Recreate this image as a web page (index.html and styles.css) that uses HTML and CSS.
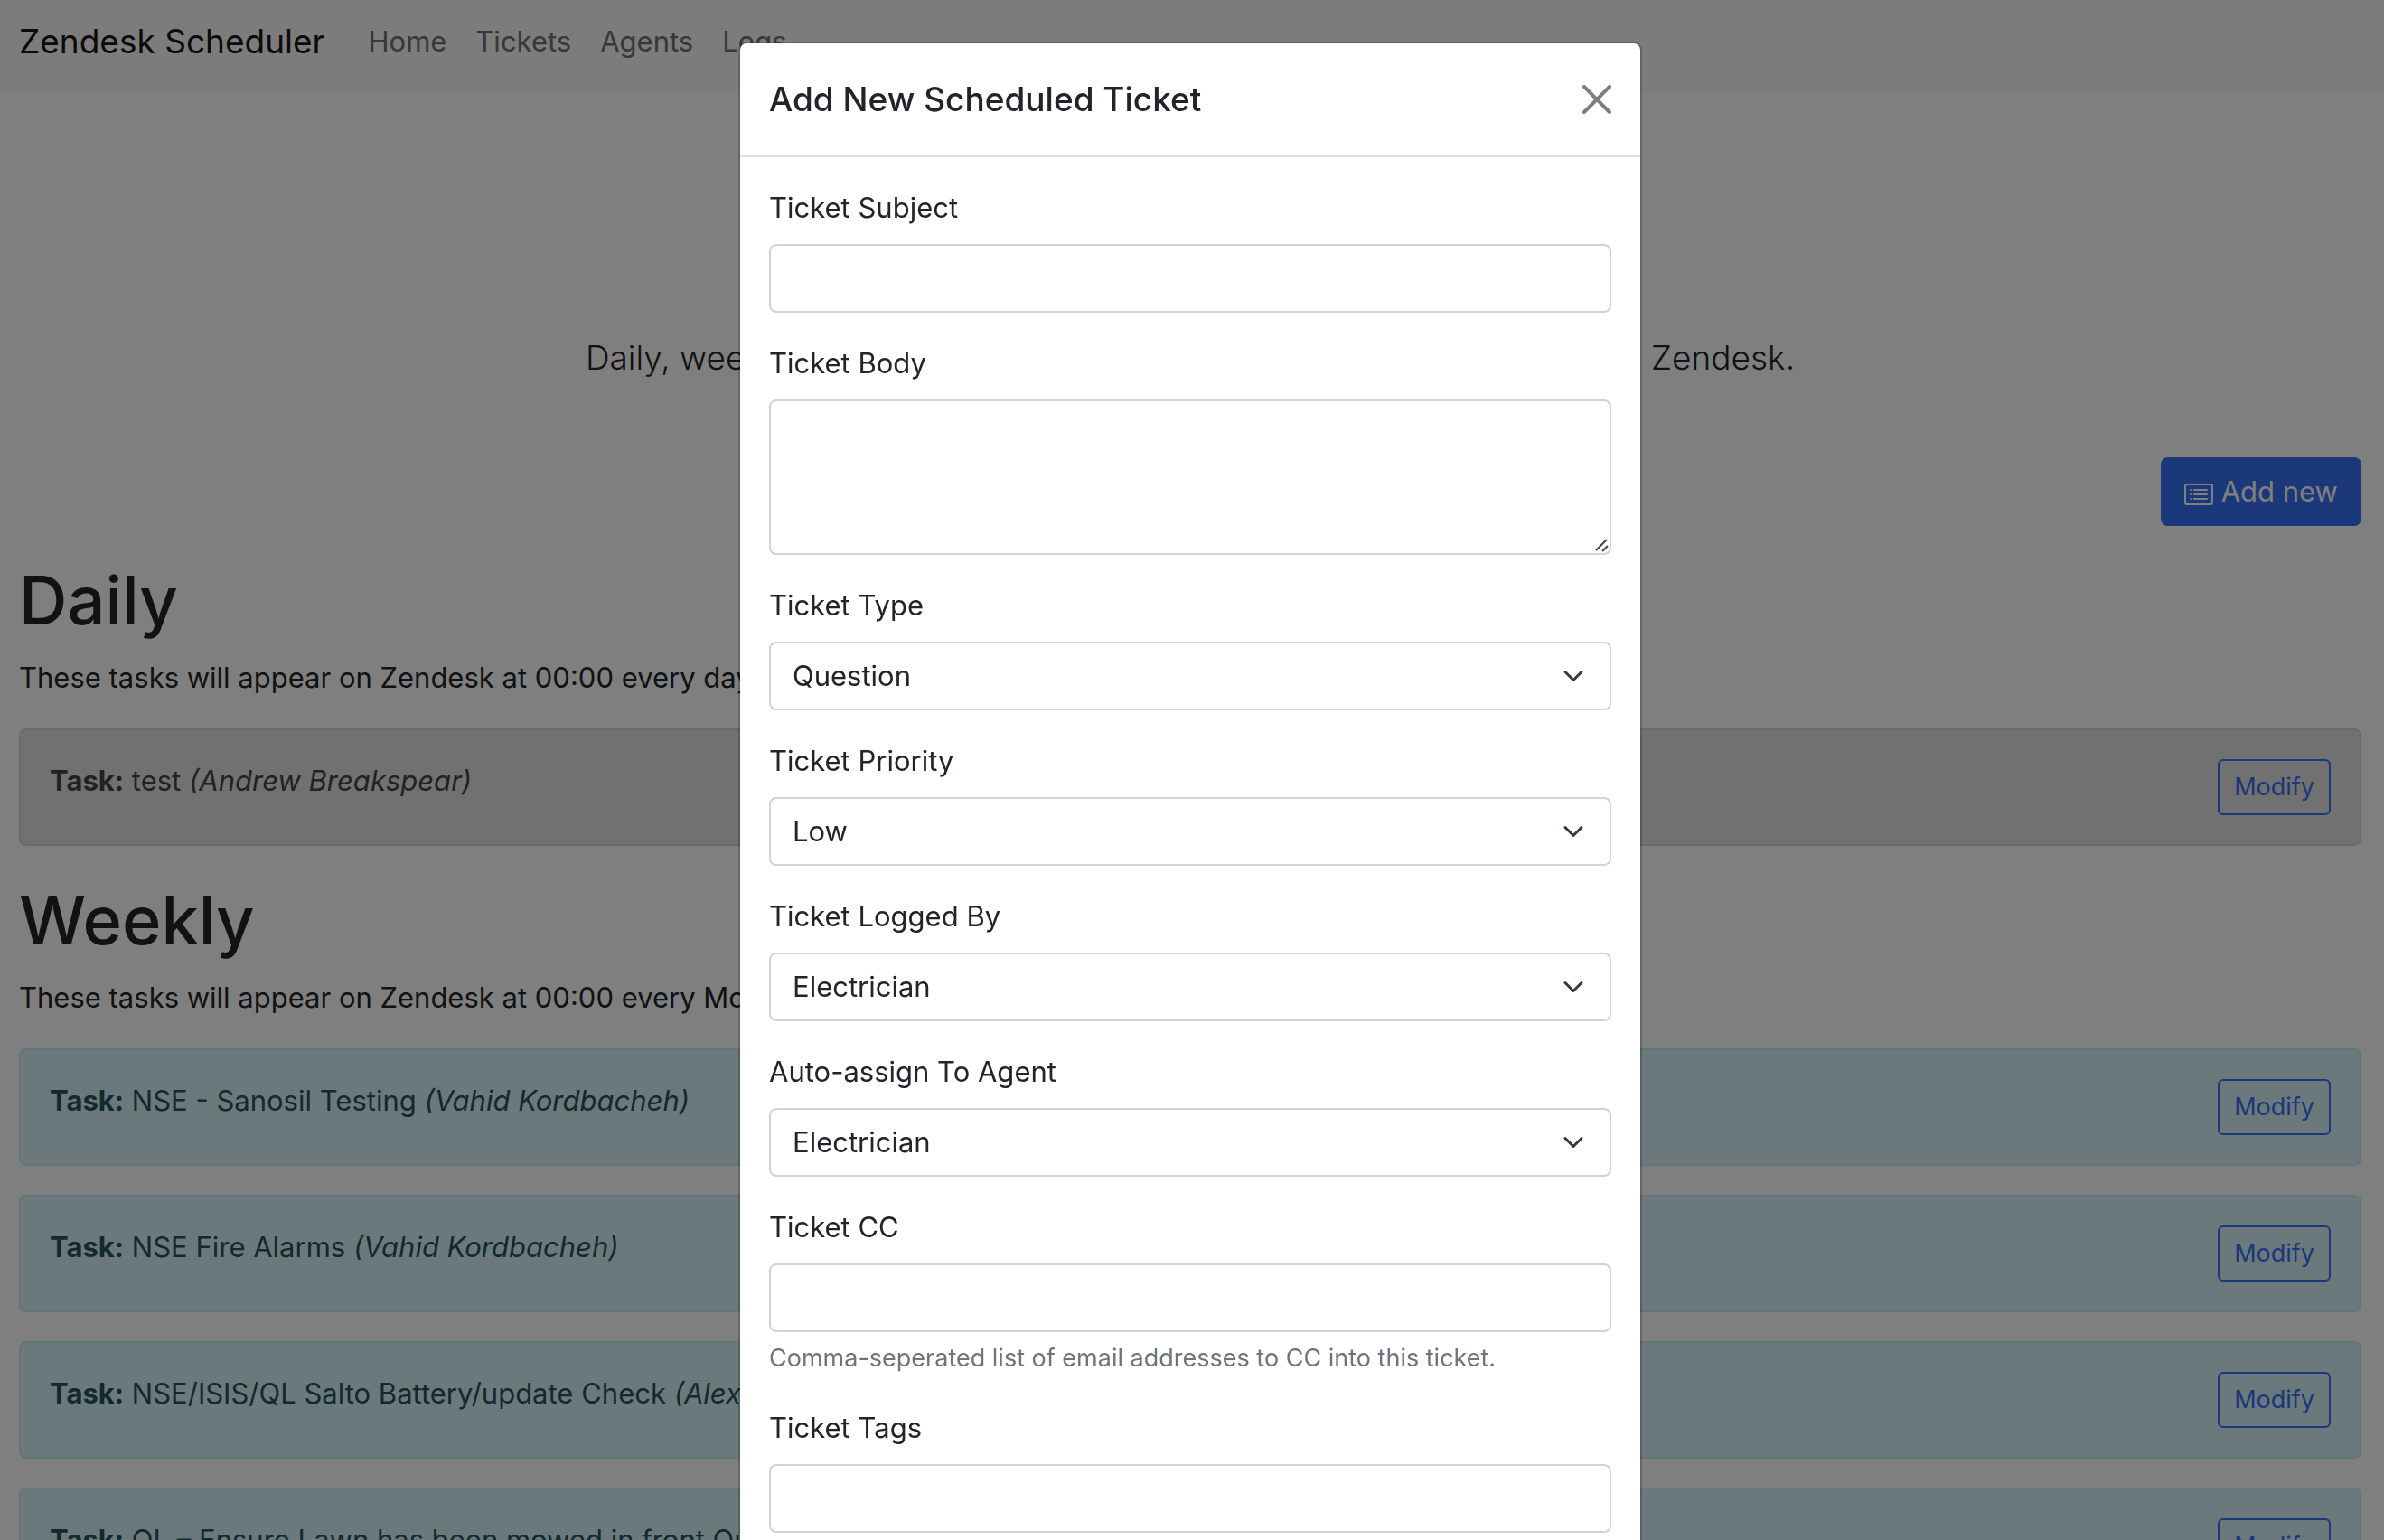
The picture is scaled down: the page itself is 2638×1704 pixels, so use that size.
FILE: index.html
```html
<!DOCTYPE html>
<html lang="en">
<head>
<meta charset="utf-8">
<title>Zendesk Scheduler</title>
<link rel="stylesheet" href="styles.css">
</head>
<body>
<header class="navbar">
  <a class="navbar-brand" href="#">Zendesk Scheduler</a>
  <nav class="navbar-nav">
    <a class="nav-link" href="#">Home</a>
    <a class="nav-link" href="#">Tickets</a>
    <a class="nav-link" href="#">Agents</a>
    <a class="nav-link" href="#">Logs</a>
  </nav>
</header>
<main class="page">
  <p class="lead">Daily, weekly, monthly and yearly tasks to be automatically added to Zendesk.</p>
  <div class="toolbar">
    <button class="btn btn-primary" type="button">
      <svg class="btn-icon" viewBox="0 0 16 16" fill="currentColor" aria-hidden="true"><path d="M14.5 3a.5.5 0 0 1 .5.5v9a.5.5 0 0 1-.5.5h-13a.5.5 0 0 1-.5-.5v-9a.5.5 0 0 1 .5-.5h13zm-13-1A1.5 1.5 0 0 0 0 3.5v9A1.5 1.5 0 0 0 1.500 14h13a1.500 1.500 0 0 0 1.500-1.500v-9A1.500 1.500 0 0 0 14.500 2h-13z"/><path d="M5 8a.5.5 0 0 1 .5-.5h7a.5.5 0 0 1 0 1h-7A.5.5 0 0 1 5 8zm0-2.500a.5.5 0 0 1 .5-.5h7a.5.5 0 0 1 0 1h-7a.5.5 0 0 1-.5-.5zm0 5a.5.5 0 0 1 .5-.5h7a.5.5 0 0 1 0 1h-7a.5.5 0 0 1-.5-.5zm-1-5a.5.5 0 1 1-1 0 .5.5 0 0 1 1 0zM4 8a.5.5 0 1 1-1 0 .5.5 0 0 1 1 0zm0 2.500a.5.5 0 1 1-1 0 .5.5 0 0 1 1 0z"/></svg>
      Add new
    </button>
  </div>
  <section>
    <h1>Daily</h1>
    <p class="intro">These tasks will appear on Zendesk at 00:00 every day.</p>
    <div class="task task-secondary">
      <p><strong>Task:</strong> test <em>(Andrew Breakspear)</em></p>
      <button class="btn btn-outline" type="button">Modify</button>
    </div>
  </section>
  <section>
    <h1>Weekly</h1>
    <p class="intro">These tasks will appear on Zendesk at 00:00 every Monday.</p>
    <div class="task task-info">
      <p><strong>Task:</strong> NSE - Sanosil Testing <em>(Vahid Kordbacheh)</em></p>
      <button class="btn btn-outline" type="button">Modify</button>
    </div>
    <div class="task task-info">
      <p><strong>Task:</strong> NSE Fire Alarms <em>(Vahid Kordbacheh)</em></p>
      <button class="btn btn-outline" type="button">Modify</button>
    </div>
    <div class="task task-info">
      <p><strong>Task:</strong> NSE/ISIS/QL Salto Battery/update Check <em>(Alex</em></p>
      <button class="btn btn-outline" type="button">Modify</button>
    </div>
    <div class="task task-info">
      <p><strong>Task:</strong> QL – Ensure Lawn has been mowed in front Quad</p>
      <button class="btn btn-outline" type="button">Modify</button>
    </div>
  </section>
</main>
<div class="backdrop"></div>
<div class="modal" role="dialog" aria-modal="true" aria-labelledby="modal-title">
  <div class="modal-content">
    <div class="modal-header">
      <h2 id="modal-title">Add New Scheduled Ticket</h2>
      <button class="btn-close" type="button" aria-label="Close">
        <svg viewBox="0 0 16 16" aria-hidden="true"><path d="M.293.293a1 1 0 0 1 1.414 0L8 6.586 14.293.293a1 1 0 1 1 1.414 1.414L9.414 8l6.293 6.293a1 1 0 0 1-1.414 1.414L8 9.414l-6.293 6.293a1 1 0 0 1-1.414-1.414L6.586 8 .293 1.707a1 1 0 0 1 0-1.414z"/></svg>
      </button>
    </div>
    <form class="modal-body">
      <div class="field">
        <label for="subject">Ticket Subject</label>
        <input class="control" id="subject" type="text">
      </div>
      <div class="field">
        <label for="body">Ticket Body</label>
        <textarea class="control control-area" id="body" rows="3"></textarea>
      </div>
      <div class="field">
        <label for="type">Ticket Type</label>
        <select class="control control-select" id="type"><option>Question</option></select>
      </div>
      <div class="field">
        <label for="priority">Ticket Priority</label>
        <select class="control control-select" id="priority"><option>Low</option></select>
      </div>
      <div class="field">
        <label for="logged-by">Ticket Logged By</label>
        <select class="control control-select" id="logged-by"><option>Electrician</option></select>
      </div>
      <div class="field">
        <label for="agent">Auto-assign To Agent</label>
        <select class="control control-select" id="agent"><option>Electrician</option></select>
      </div>
      <div class="field">
        <label for="cc">Ticket CC</label>
        <input class="control" id="cc" type="text" aria-describedby="cc-help">
        <div class="form-text" id="cc-help">Comma-seperated list of email addresses to CC into this ticket.</div>
      </div>
      <div class="field">
        <label for="tags">Ticket Tags</label>
        <input class="control" id="tags" type="text">
      </div>
    </form>
  </div>
</div>
</body>
</html>
```
FILE: styles.css
```css
*,
*::before,
*::after {
  box-sizing: border-box;
}

body {
  margin: 0;
  height: 100vh;
  overflow: hidden;
  background: #fff;
  color: #212529;
  font-family: Inter, "Liberation Sans", sans-serif;
  font-size: 31px;
  line-height: 48px;
}

h1,
h2,
p {
  margin: 0;
}

/* Navigation */
.navbar {
  display: flex;
  align-items: center;
  gap: 32px;
  padding: 6px 25px 16px 21px;
  background: #f8f8f8;
}

.navbar-brand {
  padding: 10px 0;
  color: #161616;
  font-size: 37px;
  line-height: 60px;
  text-decoration: none;
}

.navbar-nav {
  display: flex;
}

.nav-link {
  padding: 16px;
  color: #707070;
  text-decoration: none;
}

/* Page content */
.page {
  padding: 0 25px 0 21px;
}

.lead {
  padding: 264px 0 80px;
  font-size: 37px;
  font-weight: 300;
  line-height: 60px;
  text-align: center;
}

.toolbar {
  display: flex;
  justify-content: flex-end;
  margin-bottom: 32px;
}

h1 {
  margin-bottom: 16px;
  padding-top: 4px;
  font-size: 74px;
  font-weight: 500;
  line-height: 92px;
}

.intro {
  margin-bottom: 32px;
}

.task {
  display: flex;
  justify-content: space-between;
  align-items: flex-start;
  margin-bottom: 32px;
  padding: 32px;
  border: 2px solid;
  border-radius: 8px;
}

.task-secondary {
  border-color: #d4d5d6;
  background: #e2e2e2;
  color: #41464b;
}

.task-info {
  border-color: #c0ecf6;
  background: #d7f2f9;
  color: #24525e;
}

strong {
  font-weight: 700;
}

/* Buttons */
.btn {
  border: 2px solid #3470f4;
  border-radius: 8px;
  font-family: inherit;
}

.btn-primary {
  padding: 12px 24px;
  background: #3470f4;
  color: #fff;
  font-size: 31px;
  line-height: 48px;
}

.btn-icon {
  width: 32px;
  height: 32px;
  vertical-align: -8px;
}

.btn-outline {
  padding: 8px 16px;
  border-radius: 6px;
  background: transparent;
  color: #3470f4;
  font-size: 27px;
  line-height: 42px;
}

/* Modal */
.backdrop {
  position: fixed;
  inset: 0;
  background: rgba(0, 0, 0, 0.5);
}

.modal {
  position: fixed;
  inset: 0;
  overflow: hidden;
  padding: 46px 4px 46px 0;
}

.modal-content {
  max-width: 1000px;
  margin: 0 auto;
  border: 2px solid rgba(0, 0, 0, 0.2);
  border-radius: 9px;
  background: #fff;
  background-clip: padding-box;
}

.modal-header {
  display: flex;
  justify-content: space-between;
  align-items: center;
  padding: 32px;
  border-bottom: 2px solid #dee2e6;
}

.modal-header h2 {
  font-size: 37px;
  font-weight: 500;
  line-height: 60px;
}

.btn-close {
  display: flex;
  padding: 0;
  border: 0;
  background: none;
  opacity: 0.5;
}

.btn-close svg {
  width: 32px;
  height: 32px;
}

.modal-body {
  padding: 32px 32px 0;
}

.field {
  padding-bottom: 32px;
}

.field label {
  display: block;
  margin-bottom: 16px;
}

.control {
  display: block;
  width: 100%;
  height: 76px;
  padding: 12px 24px;
  border: 2px solid #ced4da;
  border-radius: 8px;
  background-color: #fff;
  color: inherit;
  font: inherit;
}

.control-area {
  height: 172px;
  resize: none;
  background-image: url("data:image/svg+xml,%3csvg xmlns='http://www.w3.org/2000/svg' viewBox='0 0 16 16'%3e%3cpath fill='none' stroke='%23444' stroke-width='2' d='M1 13L13 1M8 14L14 8'/%3e%3c/svg%3e");
  background-position: right bottom;
  background-repeat: no-repeat;
  background-size: 16px 16px;
}

.control-select {
  appearance: none;
  background-image: url("data:image/svg+xml,%3csvg xmlns='http://www.w3.org/2000/svg' viewBox='0 0 16 16'%3e%3cpath fill='none' stroke='%23343a40' stroke-linecap='round' stroke-linejoin='round' stroke-width='2' d='M2 5l6 6 6-6'/%3e%3c/svg%3e");
  background-position: right 24px center;
  background-repeat: no-repeat;
  background-size: 32px 24px;
}

.form-text {
  margin-top: 8px;
  color: #6c757d;
  font-size: 27px;
  line-height: 42px;
}
```
